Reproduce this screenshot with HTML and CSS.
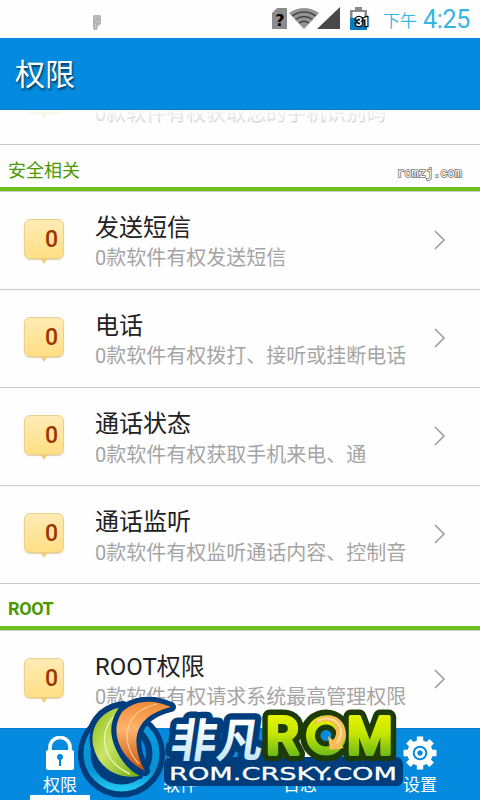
FILE: index.html
```
<!DOCTYPE html>
<html lang="zh-CN">
<head>
  <meta charset="UTF-8">
  <meta name="viewport" content="width=device-width, initial-scale=1.0">
  <title>权限</title>
  <link rel="stylesheet" href="styles.css">
</head>
<body>
  <div class="status-bar">
    <svg class="notice" width="8" height="15" viewBox="0 0 8 15">
      <path d="M1 0h6l1 1v8l-3 2-1 4H1l-1-2V1z" fill="#b4b4b4"/>
      <path d="M2 3l1 1M5 2l1 1M3 6l1 1M6 6l1 1M2 9l1 1M2 12l1 1" stroke="#ddd"/>
    </svg>
    <svg class="status-icons" width="102" height="28" viewBox="270 4 102 28">
      <path d="M277 8h10v21h-15V13z" fill="#8c8c8c"/>
      <text x="280" y="25.500" class="sim-mark">?</text>
      <path d="M304 29L289 13q15-10 30 0z" fill="#949494"/>
      <path d="M292 16q12-8 24 0M295.500 19.500q8.500-6 17 0M299 23q5-3.500 10 0" fill="none" stroke="#444" stroke-width="1.300"/>
      <path d="M340 7v22h-23z" fill="#484848"/>
      <path d="M355 7h7v3h5v20h-17V10h5z" fill="#8a8a8a"/>
      <path d="M352.500 12h12v6h-12z" fill="#fff"/>
      <path d="M350 18l17-1v13h-17z" fill="#087bc2"/>
      <text x="355.500" y="26" class="battery-level">31</text>
    </svg>
    <span class="ampm">下午</span>
    <span class="time">4:25</span>
  </div>

  <div class="header"><h1>权限</h1></div>

  <div class="list">
    <div class="row">
      <div class="badge"></div>
      <div class="info">
        <div class="name"></div>
        <div class="desc">0款软件有权获取您的手机识别码</div>
      </div>
    </div>

    <h2 class="section">安全相关<span class="site">romzj.com</span></h2>
    <div class="row">
      <div class="badge">0</div>
      <div class="info">
        <div class="name">发送短信</div>
        <div class="desc">0款软件有权发送短信</div>
      </div>
      <svg class="arrow" width="12" height="20" viewBox="0 0 12 20"><path d="M1 1l9 9-9 9"/></svg>
    </div>
    <div class="row">
      <div class="badge">0</div>
      <div class="info">
        <div class="name">电话</div>
        <div class="desc">0款软件有权拨打、接听或挂断电话</div>
      </div>
      <svg class="arrow" width="12" height="20" viewBox="0 0 12 20"><path d="M1 1l9 9-9 9"/></svg>
    </div>
    <div class="row low">
      <div class="badge">0</div>
      <div class="info">
        <div class="name">通话状态</div>
        <div class="desc">0款软件有权获取手机来电、通</div>
      </div>
      <svg class="arrow" width="12" height="20" viewBox="0 0 12 20"><path d="M1 1l9 9-9 9"/></svg>
    </div>
    <div class="row low">
      <div class="badge">0</div>
      <div class="info">
        <div class="name">通话监听</div>
        <div class="desc">0款软件有权监听通话内容、控制音</div>
      </div>
      <svg class="arrow" width="12" height="20" viewBox="0 0 12 20"><path d="M1 1l9 9-9 9"/></svg>
    </div>

    <h2 class="section root">ROOT</h2>
    <div class="row">
      <div class="badge">0</div>
      <div class="info">
        <div class="name">ROOT权限</div>
        <div class="desc">0款软件有权请求系统最高管理权限</div>
      </div>
      <svg class="arrow" width="12" height="20" viewBox="0 0 12 20"><path d="M1 1l9 9-9 9"/></svg>
    </div>
  </div>

  <div class="tabs">
    <div class="tab active">
      <svg width="34" height="34" viewBox="0 0 34 34">
        <path d="M7 15V11a10 9.500 0 0 1 20 0v4" fill="none" stroke="#fff" stroke-width="3.600"/>
        <rect x="3" y="14" width="28" height="20" rx="2" fill="#fff"/>
        <circle cx="17" cy="21" r="3" fill="#0589de"/>
        <path d="M16 22h2v8h-2z" fill="#0589de"/>
      </svg>
      <span>权限</span>
    </div>
    <div class="tab">
      <svg width="34" height="34" viewBox="0 0 34 34">
        <path d="M5 5h11v11H5zM19 5h11v11H19zM5 19h11v11H5zM19 19h11v11H19z" fill="#fff"/>
      </svg>
      <span>软件</span>
    </div>
    <div class="tab">
      <svg width="34" height="34" viewBox="0 0 34 34">
        <path d="M3 3h26v23H3z" fill="#fff"/>
      </svg>
      <span>日志</span>
    </div>
    <div class="tab">
      <svg width="34" height="34" viewBox="-17 -17 34 34">
        <circle r="10" fill="none" stroke="#fff" stroke-width="5.500"/>
        <g fill="#fff">
          <path id="tooth" d="M-3.200-16.500h6.400v6h-6.400zM-3.200 10.500h6.400v6h-6.400z"/>
          <use href="#tooth" transform="rotate(45)"/>
          <use href="#tooth" transform="rotate(90)"/>
          <use href="#tooth" transform="rotate(135)"/>
        </g>
        <circle r="4" fill="none" stroke="#fff" stroke-width="2.600"/>
      </svg>
      <span>设置</span>
    </div>
  </div>

  <svg class="logo" width="340" height="112" viewBox="70 688 340 112">
    <defs>
      <linearGradient id="lime" x1="0" y1="0" x2="1" y2="1">
        <stop offset="0" stop-color="#8dbb16"/>
        <stop offset=".45" stop-color="#c9e468"/>
        <stop offset="1" stop-color="#75aa12"/>
      </linearGradient>
      <linearGradient id="orange" x1="0" y1="0" x2="0" y2="1">
        <stop offset="0" stop-color="#f08a35"/>
        <stop offset=".4" stop-color="#ffb56e"/>
        <stop offset="1" stop-color="#c64c08"/>
      </linearGradient>
      <linearGradient id="cyan" x1="0" y1="0" x2="0" y2="1">
        <stop offset="0" stop-color="#0aa0e0"/>
        <stop offset=".75" stop-color="#0891d4"/>
        <stop offset="1" stop-color="#20c7ed"/>
      </linearGradient>
      <linearGradient id="rom" gradientUnits="userSpaceOnUse" x1="0" y1="714" x2="0" y2="758">
        <stop offset="0" stop-color="#e9f500"/>
        <stop offset=".45" stop-color="#c5e600"/>
        <stop offset="1" stop-color="#62b51d"/>
      </linearGradient>
      <linearGradient id="ice" x1="0" y1="0" x2="0" y2="1">
        <stop offset=".3" stop-color="#fff"/>
        <stop offset="1" stop-color="#b5e0fa"/>
      </linearGradient>
    </defs>

    <!-- emblem -->
    <circle cx="121.500" cy="754" r="34" fill="none" stroke="#003d7c" stroke-width="19"/>
    <path class="edge" d="M123 707C101 710 90 727 93 745C97 766 115 780 140 776C119 765 105 739 123 707z"/>
    <circle cx="121.500" cy="753.500" r="34.500" fill="none" stroke="url(#cyan)" stroke-width="7"/>
    <path class="edge edge-thin" d="M123 707C101 710 90 727 93 745C97 766 115 780 140 776C119 765 105 739 123 707z"/>
    <path class="lime" d="M123 707C101 710 90 727 93 745C97 766 115 780 140 776C119 765 105 739 123 707z"/>
    <path d="M120 711C97 728 99 760 130 774" fill="none" stroke="#e4f6a3" stroke-width="1.500"/>
    <path class="edge edge-mid" d="M171 707C151 698 133 701 122 712C108 733 122 760 145 771C134 751 126 718 171 707z"/>
    <path class="orange" d="M171 707C151 698 133 701 122 712C108 733 122 760 145 771C134 751 126 718 171 707z"/>
    <path d="M157 704C122 712 120 744 139 764" fill="none" stroke="#ffd09a" stroke-width="1.200"/>

    <!-- wordmark -->
    <g transform="translate(171 757) skewX(-8)">
      <text class="cn cn-edge" x="-2" y="0">非凡</text>
    </g>
    <rect x="164" y="757" width="239" height="29" rx="7" fill="#003d7c"/>
    <g transform="translate(171 757) skewX(-8)">
      <text class="cn" x="-2" y="0">非凡</text>
    </g>
    <g class="rom rom-edge">
      <text x="266" y="754">R</text>
      <circle cx="326" cy="735.500" r="15.500"/>
      <text x="347" y="754">M</text>
    </g>
    <rect x="262" y="761" width="141" height="25" rx="7" fill="#003d7c"/>
    <g class="rom">
      <text x="266" y="754">R</text>
      <circle cx="326" cy="735.500" r="15.500"/>
      <text x="347" y="754">M</text>
    </g>
    <circle cx="326" cy="735.500" r="5.500" fill="#048ade"/>
    <path d="M312 725C318 715 331 712 339 719C347 725 348 738 341 745L344 748L330 750L328 736L333 740C338 735 337 725 330 722C323 720 317 723 312 725z" fill="#f5bd58"/>
    <path d="M317 721q15-7 23 5q3 9-3 17" fill="none" stroke="#ffdc96" stroke-width="2"/>
    <text class="url" x="169" y="780" textLength="228" lengthAdjust="spacingAndGlyphs">ROM.CRSKY.COM</text>
  </svg>
</body>
</html>
```
FILE: styles.css
```
* {
  box-sizing: border-box;
}
body {
  margin: 0;
  width: 480px;
  height: 800px;
  display: flex;
  flex-direction: column;
  overflow: hidden;
  position: relative;
  background: #fefefe;
  font-family: Roboto, "Noto Sans CJK SC", sans-serif;
}
h1, h2 {
  margin: 0;
  font-weight: 400;
}
.status-bar {
  height: 38px;
  flex: none;
  display: flex;
  align-items: center;
  padding: 0 10px 0 93px;
  color: #33b5e5;
}
.notice {
  margin-top: 7px;
}
.status-icons {
  margin-left: auto;
  margin-bottom: 2px;
}
.sim-mark {
  font: 700 16px "DejaVu Sans", sans-serif;
  text-anchor: middle;
}
.battery-level {
  font: 700 12px Roboto, sans-serif;
  fill: #fff;
  stroke: #000;
  stroke-width: 2.5px;
  paint-order: stroke;
}
.ampm {
  font-size: 17px;
  font-weight: 350;
  margin: 0 6px 0 11px;
}
.time {
  font-size: 25px;
  width: 47px;
  letter-spacing: -0.3px;
}
.header {
  height: 72px;
  flex: none;
  display: flex;
  align-items: center;
  padding: 2px 0 0 15px;
  background: #048ade;
  border-bottom: 1px solid #0a7fd0;
}
.header h1 {
  font-size: 30px;
  line-height: 44px;
  color: #fff;
  text-shadow: 1px 2px 2px rgba(0,0,0,0.6);
}
.list {
  flex: 1;
  min-height: 0;
  overflow: hidden;
  position: relative;
}
/* fade under the header */
.list::before {
  content: "";
  position: absolute;
  z-index: 1;
  top: 0;
  left: 0;
  right: 0;
  height: 22px;
  background: linear-gradient(rgba(254,254,254,0.95), rgba(254,254,254,0.2));
}
.row {
  height: 98px;
  display: flex;
  align-items: center;
  padding: 0 34px 0 24px;
  border-bottom: 1px solid #c8c8c8;
}
.row:first-child {
  margin-top: -63px;
}
.row:first-child .badge {
  margin-bottom: 6px;
}
.badge {
  position: relative;
  flex: none;
  width: 40px;
  height: 40px;
  margin: 0 31px 4px 0;
  padding-right: 5px;
  border: 1px solid #edcf8c;
  border-radius: 6px;
  background: linear-gradient(#ffebb5, #ffdf84);
  box-shadow: 0 1px 1px rgba(150,110,30,0.3);
  color: #9c3500;
  font-size: 23px;
  font-weight: 500;
  line-height: 39px;
  text-align: right;
}
.badge::after {
  content: "";
  position: absolute;
  left: 15px;
  top: 38px;
  border: 4px solid transparent;
  border-top: 6px solid #efcc7a;
  border-bottom: 0;
}
.info {
  flex: 1;
  white-space: nowrap;
  padding-top: 2px;
}
.name {
  height: 32px;
  font-size: 24px;
  line-height: 32px;
  color: #222;
}
.desc {
  font-size: 20px;
  line-height: 28px;
  color: #a5a5a5;
}
.low .info {
  padding-top: 4px;
}
.low .desc {
  padding-top: 1px;
}
.row:first-child .desc {
  padding-top: 2px;
}
.arrow {
  fill: none;
  stroke: #a0a0a0;
  stroke-width: 1.7;
  margin-bottom: 1px;
}
.section {
  height: 46px;
  display: flex;
  align-items: center;
  justify-content: space-between;
  padding: 6px 18px 0 8px;
  margin-bottom: 1px;
  border-bottom: 4px solid #70c01d;
  box-shadow: 0 1px #ccc;
  font-size: 18px;
  color: #4a9900;
}
.root {
  font-weight: 700;
  letter-spacing: -0.4px;
}
.site {
  font: 12px "Liberation Mono", monospace;
  color: #fff;
  -webkit-text-stroke: 1.6px #777;
  paint-order: stroke fill;
  margin-top: 10px;
}
.tabs {
  height: 72px;
  flex: none;
  display: flex;
  background: #048ade;
  border-top: 1px solid #0a7fd0;
}
.tab {
  flex: 1;
  display: flex;
  flex-direction: column;
  align-items: center;
  padding-top: 7px;
  font-size: 17px;
  line-height: 24px;
  color: #fff;
}
.tab span {
  height: 22px;
  margin-top: 3px;
}
.active::after {
  content: "";
  width: 60px;
  height: 5px;
  flex: none;
  background: #fff;
}
.logo {
  position: absolute;
  left: 70px;
  top: 688px;
}
.edge {
  fill: #003d7c;
  stroke: #003d7c;
  stroke-width: 12px;
  stroke-linejoin: round;
}
.edge-mid {
  stroke-width: 10px;
}
.edge-thin {
  stroke-width: 6px;
}
.lime {
  fill: url(#lime);
}
.orange {
  fill: url(#orange);
}
.cn {
  font: 700 46px "Noto Sans CJK SC", sans-serif;
  fill: url(#ice);
}
.cn-edge {
  fill: #003d7c;
  stroke: #003d7c;
  stroke-width: 13px;
  stroke-linejoin: round;
}
.rom {
  font: 500 52px Roboto, sans-serif;
  fill: url(#rom);
  stroke: url(#rom);
  stroke-width: 4px;
  stroke-linejoin: round;
}
.rom circle {
  fill: none;
  stroke-width: 9px;
}
.rom-edge {
  fill: #1c3b07;
  stroke: #1c3b07;
  stroke-width: 15px;
}
.rom-edge circle {
  stroke-width: 21px;
}
.url {
  font: 18px "DejaVu Sans", sans-serif;
  fill: #fff;
  stroke: #fff;
  stroke-width: 0.3px;
}
```
